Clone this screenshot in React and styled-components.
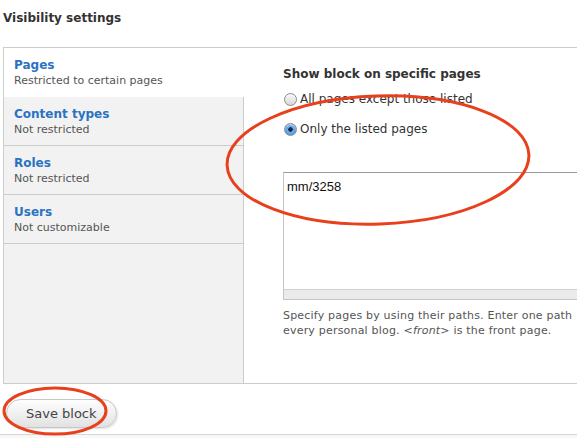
import React from "react";
import styled, { createGlobalStyle } from "styled-components";

const GlobalStyle = createGlobalStyle`
  html, body {
    margin: 0;
    padding: 0;
    background: #fff;
    overflow: hidden;
  }
  body {
    font-family: "DejaVu Sans", "Noto Sans", sans-serif;
    color: #333;
  }
`;

const Page = styled.div`
  position: relative;
  width: 577px;
  height: 438px;
  overflow: hidden;
`;

const Title = styled.h2`
  margin: 0;
  padding: 11px 0 0 3px;
  height: 36px;
  font-size: 12px;
  font-weight: bold;
  color: #333;
`;

const Box = styled.div`
  display: flex;
  width: 660px;
  height: 335px;
  margin-left: 3px;
  border: 1px solid #ccc;
`;

const Tabs = styled.ul`
  list-style: none;
  margin: 0;
  padding: 0;
  width: 239px;
  flex: none;
  background: #f2f2f2;
  border-right: 1px solid #ccc;
`;

const Tab = styled.li`
  box-sizing: border-box;
  height: 49px;
  padding: 10px 0 0 10px;
  border-bottom: 1px solid ${(p) => (p.$active ? "transparent" : "#ccc")};
  background: ${(p) => (p.$active ? "#fff" : "transparent")};
  margin-right: ${(p) => (p.$active ? "-1px" : "0")};
`;

const TabTitle = styled.div`
  font-size: 12px;
  font-weight: bold;
  color: #2a72c2;
  line-height: 15px;
`;

const TabSummary = styled.div`
  font-size: 11px;
  color: #555;
  line-height: 15px;
`;

const Pane = styled.div`
  flex: 1;
  padding: 19px 0 0 39px;
`;

const Legend = styled.div`
  font-size: 12px;
  font-weight: bold;
  color: #333;
  margin-bottom: 11px;
`;

const RadioRow = styled.label`
  display: flex;
  align-items: center;
  gap: 3px;
  font-size: 12px;
  color: #333;
  height: 14px;
  margin-bottom: ${(p) => p.$gap}px;
`;

const Radio = styled.span`
  width: 11px;
  height: 11px;
  margin-left: 1px;
  border-radius: 50%;
  border: 1px solid #8a8a8a;
  background: ${(p) =>
    p.$checked
      ? "radial-gradient(circle, #1a2a40 0 2px, #6fb2f0 2.5px, #3b84d8 100%)"
      : "linear-gradient(#f8f8f8, #d8d8d8)"};
  box-shadow: inset 0 1px 1px rgba(255, 255, 255, 0.8);
  flex: none;
`;

const TextArea = styled.div`
  width: 360px;
  border: 1px solid #c4c4c4;
  border-top-color: #999;
  background: #fff;
`;

const TextBody = styled.div`
  height: 110px;
  padding: 6px 0 0 3px;
  font-family: "Liberation Sans", Arial, sans-serif;
  font-size: 13px;
  color: #111;
`;

const Grip = styled.div`
  height: 9px;
  background: #ebebeb;
  border-top: 1px solid #d0d0d0;
`;

const Description = styled.div`
  margin-top: 8px;
  font-size: 11px;
  line-height: 15px;
  letter-spacing: 0.2px;
  color: #555;
  white-space: nowrap;
`;

const Actions = styled.div`
  padding: 15px 0 0 6px;
  height: 35px;
`;

const Button = styled.button`
  height: 29px;
  padding: 0 19px;
  border-radius: 15px;
  border: 1px solid #c6c6c6;
  background: linear-gradient(#fefefe, #e2e2e2);
  box-shadow: 1px 1px 2px rgba(0, 0, 0, 0.12);
  font-family: "DejaVu Sans", sans-serif;
  font-size: 13px;
  color: #444;
`;

const Footer = styled.div`
  border-top: 1px solid #d6d6d6;
  background: #f7f7f7;
  height: 20px;
`;

const Annotations = styled.svg`
  position: absolute;
  left: 0;
  top: 0;
  pointer-events: none;
`;

const tabs = [
  { title: "Pages", summary: "Restricted to certain pages", active: true },
  { title: "Content types", summary: "Not restricted" },
  { title: "Roles", summary: "Not restricted" },
  { title: "Users", summary: "Not customizable" },
];

export default function App() {
  return (
    <Page>
      <GlobalStyle />
      <Title>Visibility settings</Title>
      <Box>
        <Tabs>
          {tabs.map((t) => (
            <Tab key={t.title} $active={t.active}>
              <TabTitle>{t.title}</TabTitle>
              <TabSummary>{t.summary}</TabSummary>
            </Tab>
          ))}
        </Tabs>
        <Pane>
          <Legend>Show block on specific pages</Legend>
          <RadioRow $gap={16}>
            <Radio />
            All pages except those listed
          </RadioRow>
          <RadioRow $gap={36}>
            <Radio $checked />
            Only the listed pages
          </RadioRow>
          <TextArea>
            <TextBody>mm/3258</TextBody>
            <Grip />
          </TextArea>
          <Description>
            Specify pages by using their paths. Enter one path
            <br />
            every personal blog. <i>&lt;front&gt;</i> is the front page.
          </Description>
        </Pane>
      </Box>
      <Actions>
        <Button>Save block</Button>
      </Actions>
      <Footer />
      <Annotations width="577" height="438">
        <ellipse
          cx="378"
          cy="160"
          rx="151"
          ry="64"
          fill="none"
          stroke="#e8401c"
          strokeWidth="3"
          transform="rotate(-2 378 160)"
        />
        <ellipse
          cx="55"
          cy="411"
          rx="51"
          ry="23"
          fill="none"
          stroke="#e8401c"
          strokeWidth="3"
        />
      </Annotations>
    </Page>
  );
}
